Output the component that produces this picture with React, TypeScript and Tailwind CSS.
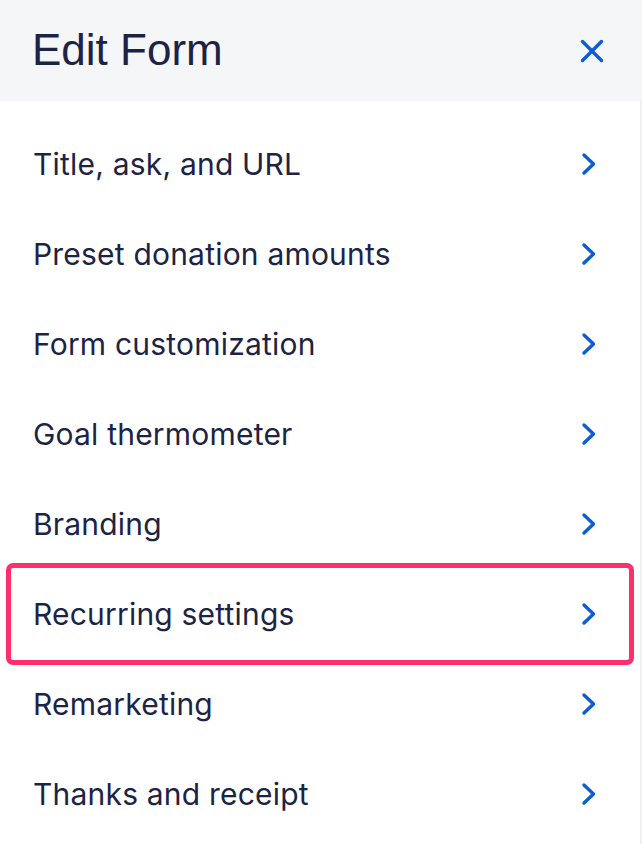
const sections = [
  'Title, ask, and URL',
  'Preset donation amounts',
  'Form customization',
  'Goal thermometer',
  'Branding',
  'Recurring settings',
  'Remarketing',
  'Thanks and receipt',
];

function Chevron() {
  return (
    <svg width="18" height="26" viewBox="0 0 18 26" fill="none" className="shrink-0">
      <polyline
        points="4,4 13.5,13 4,22"
        stroke="#0b5cd5"
        strokeWidth="3.4"
        strokeLinecap="round"
        strokeLinejoin="round"
      />
    </svg>
  );
}

function CloseIcon() {
  return (
    <svg width="24" height="24" viewBox="0 0 24 24" fill="none" className="shrink-0">
      <path d="M2.5 2.5 L21.5 21.5 M21.5 2.5 L2.5 21.5" stroke="#0b5cd5" strokeWidth="3.4" strokeLinecap="round" />
    </svg>
  );
}

export default function App() {
  return (
    <div className="w-[642px] h-[844px] bg-white overflow-hidden flex flex-col">
      <div className="h-[101px] shrink-0 bg-[#f5f6f8] flex items-center justify-between pl-[32px] pr-[38px]">
        <h1 className="text-[44px] leading-none text-[#1c2344] font-['Liberation_Sans',Arial,sans-serif] pb-[2px]">
          Edit Form
        </h1>
        <CloseIcon />
      </div>

      <div className="flex-1 border-r-2 border-[#eef0f3] pt-[18px] px-[12px]">
        {sections.map((label, i) => (
          <div
            key={label}
            className={
              'h-[90px] flex items-center justify-between pl-[21px] pr-[30px] rounded-[1px] ' +
              (i === 5 ? 'outline-[5px] outline-solid outline-[#ff2f6d] outline-offset-1' : '')
            }
          >
            <span className="text-[30px] text-[#1c2344] font-['Inter',sans-serif] tracking-[0.2px]">
              {label}
            </span>
            <Chevron />
          </div>
        ))}
      </div>
    </div>
  );
}
